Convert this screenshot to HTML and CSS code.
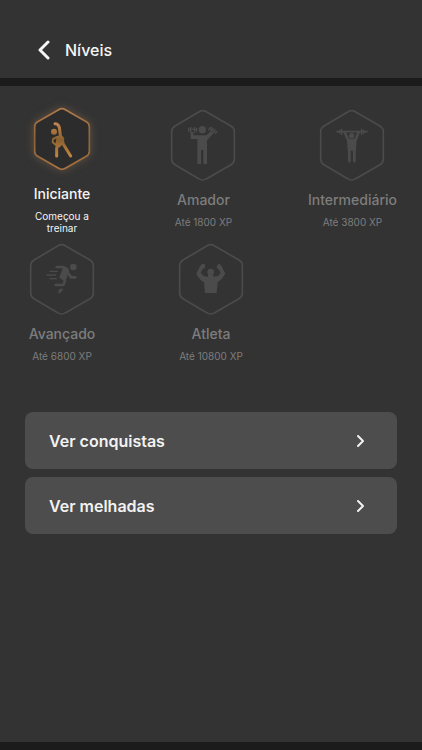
FILE: index.html
```html
<!DOCTYPE html>
<html lang="pt-BR">
<head>
<meta charset="utf-8">
<meta name="viewport" content="width=device-width, initial-scale=1">
<title>Níveis</title>
<link rel="stylesheet" href="styles.css">
</head>
<body>
<svg class="defs" aria-hidden="true">
  <defs>
    <linearGradient id="gold" x1="0" y1="0" x2="0" y2="1">
      <stop offset="0" stop-color="#b07a48"/>
      <stop offset="0.5" stop-color="#8c6238"/>
      <stop offset="1" stop-color="#aa7340"/>
    </linearGradient>
    <linearGradient id="figure-gold" gradientUnits="userSpaceOnUse" x1="0" y1="80" x2="0" y2="188">
      <stop offset="0" stop-color="#c58a50"/>
      <stop offset="0.5" stop-color="#8a6030"/>
      <stop offset="1" stop-color="#c68a40"/>
    </linearGradient>
    <path id="hexagon" d="M122 36Q134 28 146 36L219 78Q229 84 229 95V177Q229 188 219 194L146 236Q134 244 122 236L51 194Q41 188 41 177V95Q41 84 51 78Z"/>
  </defs>
</svg>
<header class="header">
  <button class="back" type="button" aria-label="Voltar">
    <svg width="14" height="20" viewBox="0 0 14 20" aria-hidden="true"><path d="M11 2L3 10L11 18"/></svg>
  </button>
  <h1 class="title">Níveis</h1>
</header>
<main class="main">
  <ul class="levels">
    <li class="level level-active">
      <svg class="badge badge-active" viewBox="15 21 222 240" aria-hidden="true">
        <path class="hex-gold" d="M116 44Q126 38 136 44L199 80Q208 85 208 95V169Q208 179 199 184L136 220Q126 226 116 220L53 184Q44 179 44 169V95Q44 85 53 80Z"/>
        <g class="stretch">
          <circle class="solid" cx="102" cy="110" r="9"/>
          <path d="M105 86Q118 86 119 105L122 128L129 146L152 183"/>
          <path class="arm" d="M112 126L99 132L98 142L108 150"/>
          <path d="M113 148L110 160V183"/>
          <path class="solid" d="M110 124Q127 116 132 130L133 144L117 158L106 149Z"/>
        </g>
      </svg>
      <h2 class="name">Iniciante</h2>
      <p class="detail">Começou a treinar</p>
    </li>
    <li class="level">
      <svg class="badge" viewBox="24 6 222 258" aria-hidden="true">
        <use class="hex" href="#hexagon"/>
        <circle class="solid" cx="133" cy="89" r="11"/>
        <path class="solid" d="M98 96H106V106H145L160 93L167 100L147 121V192H136V150H129V192H118V117H98Z"/>
        <path class="thin" d="M96 88H113M155 84L174 98"/>
        <path class="weights" d="M92 83V95M98 81V98M110 81V98M116 83V95M161 81L151 91M167 84L157 94M173 88L163 99M178 93L171 101"/>
      </svg>
      <h2 class="name">Amador</h2>
      <p class="detail">Até 1800 XP</p>
    </li>
    <li class="level">
      <svg class="badge" viewBox="24 6 222 258" aria-hidden="true">
        <use class="hex" href="#hexagon"/>
        <path class="bar" d="M90 95H180"/>
        <path class="weights" d="M98 89V101M104 86V105M164 86V105M170 89V101"/>
        <circle class="solid" cx="134" cy="107" r="8"/>
        <path class="limb" d="M113 96L123 119M155 96L146 119M127 148V184M142 148V184"/>
        <path class="solid" d="M120 116H149L147 152H122Z"/>
      </svg>
      <h2 class="name">Intermediário</h2>
      <p class="detail">Até 3800 XP</p>
    </li>
  </ul>
  <ul class="levels levels-partial">
    <li class="level">
      <svg class="badge" viewBox="24 6 222 258" aria-hidden="true">
        <use class="hex" href="#hexagon"/>
        <circle class="solid" cx="169" cy="99" r="10"/>
        <path class="limb" d="M119 99H137L145 104M153 117L162 130H175M134 127L144 141L139 153H116"/>
        <path class="solid" d="M139 97Q155 99 157 111L145 142L127 131Z"/>
        <path class="solid" d="M128 164H139Q137 173 124 179Q123 169 128 164Z"/>
        <path class="thin" d="M99 112H121M90 123H115M99 134H118"/>
      </svg>
      <h2 class="name">Avançado</h2>
      <p class="detail">Até 6800 XP</p>
    </li>
    <li class="level">
      <svg class="badge" viewBox="24 6 222 258" aria-hidden="true">
        <use class="hex" href="#hexagon"/>
        <circle class="solid" cx="134" cy="114" r="10"/>
        <path class="solid" d="M126 121H142V128L156 126L164 117L158 106L152 102L154 92L161 89L167 97L178 119Q169 135 155 145L152 177H117L114 145Q98 135 91 119L102 97L109 89L117 91L117 101L109 106L104 117L113 126L126 128Z"/>
      </svg>
      <h2 class="name">Atleta</h2>
      <p class="detail">Até 10800 XP</p>
    </li>
  </ul>
  <nav class="links">
    <a class="link" href="#conquistas">Ver conquistas
      <svg width="10" height="14" viewBox="0 0 10 14" aria-hidden="true"><path d="M2 2L7 7L2 12"/></svg>
    </a>
    <a class="link" href="#melhadas">Ver melhadas
      <svg width="10" height="14" viewBox="0 0 10 14" aria-hidden="true"><path d="M2 2L7 7L2 12"/></svg>
    </a>
  </nav>
</main>
<footer class="footer"></footer>
</body>
</html>
```
FILE: styles.css
```css
* {
  box-sizing: border-box;
}

body {
  margin: 0;
  min-height: 100vh;
  display: flex;
  flex-direction: column;
  background: #333;
  color: #f5f5f5;
  font-family: Inter, "Liberation Sans", sans-serif;
}

h1, h2, p, ul {
  margin: 0;
  padding: 0;
}

.defs {
  position: absolute;
  width: 0;
  height: 0;
}

.header {
  display: flex;
  align-items: center;
  gap: 14px;
  padding: 38px 37px 16px;
  border-bottom: 8px solid #1b1b1b;
}

.back {
  display: flex;
  padding: 0;
  border: 0;
  background: none;
  color: inherit;
}

.back svg, .link svg {
  fill: none;
  stroke: currentColor;
  stroke-width: 3;
  stroke-linecap: round;
  stroke-linejoin: round;
}

.title {
  font-size: 16px;
  line-height: 24px;
  font-weight: 500;
}

.main {
  flex: 1;
  padding: 16px 25px;
}

.levels {
  display: flex;
  justify-content: space-between;
  margin-bottom: 2px;
  list-style: none;
}

.levels-partial::after {
  content: "";
  width: 74px;
}

.level {
  display: flex;
  flex-direction: column;
  align-items: center;
  min-width: 74px;
  color: #7d7d7d;
  text-align: center;
}

.level-active {
  width: 74px;
  color: #f5f5f5;
}

.badge {
  width: 74px;
  height: 86px;
  fill: none;
  stroke: #4b4b4b;
  stroke-linecap: round;
  stroke-linejoin: round;
}

.badge-active {
  height: 80px;
  overflow: visible;
}

.hex {
  stroke-width: 5px;
}

.hex-gold {
  fill: #2c2c2c;
  stroke: url(#gold);
  stroke-width: 5px;
  filter: drop-shadow(0 0 12px #8f6f5480);
}

.badge .solid {
  fill: #4b4b4b;
  stroke: none;
}

.thin {
  stroke-width: 4px;
}

.bar {
  stroke-width: 5px;
}

.weights {
  stroke-width: 4px;
  stroke-linecap: butt;
}

.limb {
  stroke-width: 8px;
}

.stretch {
  stroke: url(#figure-gold);
  stroke-width: 9px;
}

.stretch .arm {
  stroke-width: 6px;
}

.badge .stretch .solid {
  fill: url(#figure-gold);
}

.name {
  font-size: 14px;
  line-height: 24px;
  font-weight: 500;
}

.detail {
  margin-top: 4px;
  font-size: 10px;
  line-height: 12px;
}

.links {
  display: flex;
  flex-direction: column;
  gap: 8px;
  margin-top: 50px;
}

.link {
  display: flex;
  align-items: center;
  justify-content: space-between;
  padding: 17px 31px 16px 24px;
  border-radius: 8px;
  background: #4d4d4d;
  color: #f2f2f2;
  font-size: 16px;
  line-height: 24px;
  font-weight: 600;
  text-decoration: none;
}

.link svg {
  stroke-width: 2px;
}

.footer {
  height: 8px;
  background: #1b1b1b;
}
```
